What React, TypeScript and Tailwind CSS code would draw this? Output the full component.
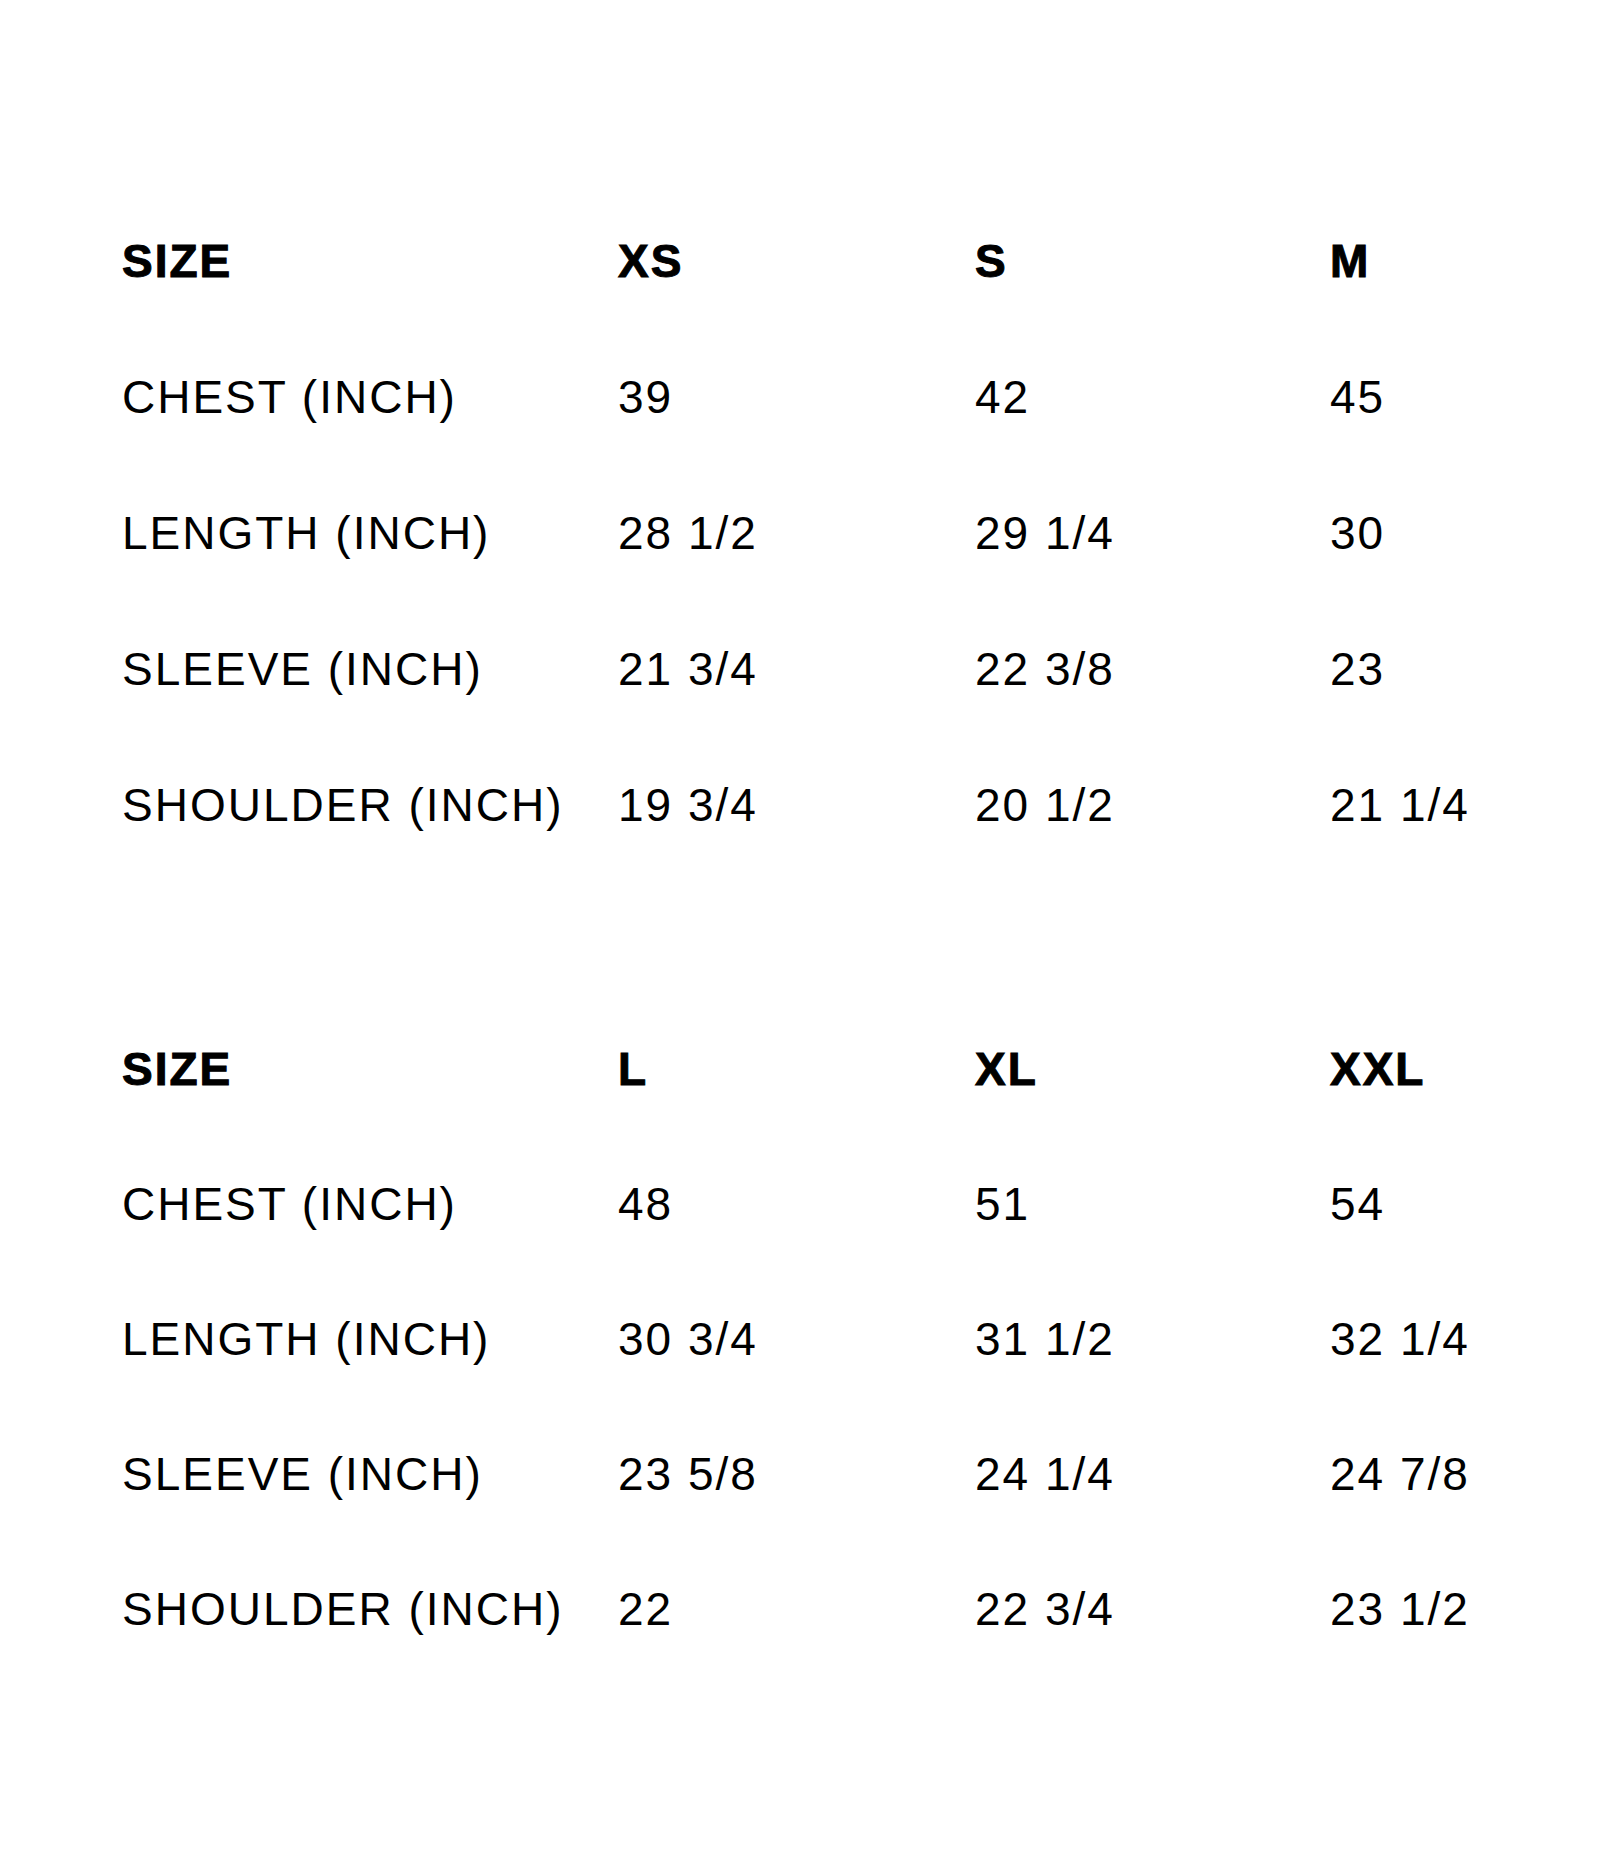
const tables = [
  {
    step: "auto-rows-[136px]",
    sizes: ["XS", "S", "M"],
    rows: [
      { label: "CHEST (INCH)", values: ["39", "42", "45"] },
      { label: "LENGTH (INCH)", values: ["28 1/2", "29 1/4", "30"] },
      { label: "SLEEVE (INCH)", values: ["21 3/4", "22 3/8", "23"] },
      { label: "SHOULDER (INCH)", values: ["19 3/4", "20 1/2", "21 1/4"] },
    ],
  },
  {
    step: "auto-rows-[135px]",
    sizes: ["L", "XL", "XXL"],
    rows: [
      { label: "CHEST (INCH)", values: ["48", "51", "54"] },
      { label: "LENGTH (INCH)", values: ["30 3/4", "31 1/2", "32 1/4"] },
      { label: "SLEEVE (INCH)", values: ["23 5/8", "24 1/4", "24 7/8"] },
      { label: "SHOULDER (INCH)", values: ["22", "22 3/4", "23 1/2"] },
    ],
  },
];

interface SizeTableProps {
  step: string;
  sizes: string[];
  rows: { label: string; values: string[] }[];
}

function SizeTable({ step, sizes, rows }: SizeTableProps) {
  return (
    <div className={`grid grid-cols-[496px_357px_355px_1fr] ${step}`}>
      <div className="font-bold [-webkit-text-stroke:1px_black]">SIZE</div>
      {sizes.map((s) => (
        <div key={s} className="font-bold [-webkit-text-stroke:1px_black]">
          {s}
        </div>
      ))}
      {rows.map((row) => (
        <div key={row.label} className="contents">
          <div>{row.label}</div>
          {row.values.map((v, i) => (
            <div key={i}>{v}</div>
          ))}
        </div>
      ))}
    </div>
  );
}

export default function App() {
  return (
    <div
      className="w-[1600px] h-[1875px] bg-white text-black pl-[122px] pt-[238px] flex flex-col gap-[128px] text-[46px] leading-none tracking-[2px]"
      style={{ fontFamily: '"Liberation Sans", Arial, sans-serif' }}
    >
      {tables.map((t, i) => (
        <SizeTable key={i} step={t.step} sizes={t.sizes} rows={t.rows} />
      ))}
    </div>
  );
}
